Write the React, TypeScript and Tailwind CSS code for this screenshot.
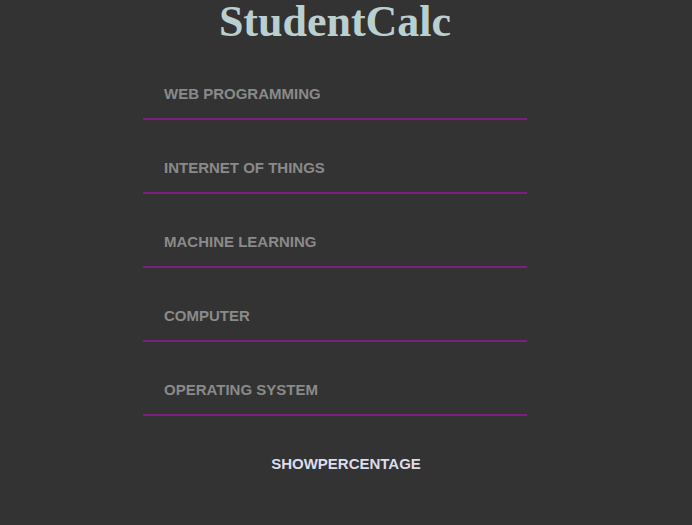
import { useState } from "react";

const subjects = [
  "WEB PROGRAMMING",
  "INTERNET OF THINGS",
  "MACHINE LEARNING",
  "COMPUTER",
  "OPERATING SYSTEM",
];

export default function App() {
  const [marks, setMarks] = useState<string[]>(subjects.map(() => ""));

  return (
    <div className="min-h-[525px] w-full bg-[#333333] font-['Liberation_Sans',Arial,sans-serif]">
      <div className="flex w-[670px] flex-col items-center">
        <h1 className="h-[44px] font-['Liberation_Serif','Times_New_Roman',serif] text-[44px] font-bold leading-[44px] text-[#bccfcf]">
          StudentCalc
        </h1>
        <div className="mt-[24px] flex flex-col gap-[22px]">
          {subjects.map((s, i) => (
            <input
              key={s}
              type="text"
              placeholder={s}
              value={marks[i]}
              onChange={(e) => {
                const next = [...marks];
                next[i] = e.target.value;
                setMarks(next);
              }}
              className="h-[52px] w-[384px] border-b-2 border-[#7d1f80] bg-transparent px-[21px] text-[15px] font-bold text-[#cccccc] outline-none placeholder:text-[#8a8a8a]"
            />
          ))}
        </div>
      </div>
      <div className="mt-[38px] flex justify-center">
        <button className="h-[20px] text-[15px] font-bold leading-[20px] text-[#dcdcea]">
          SHOWPERCENTAGE
        </button>
      </div>
    </div>
  );
}
